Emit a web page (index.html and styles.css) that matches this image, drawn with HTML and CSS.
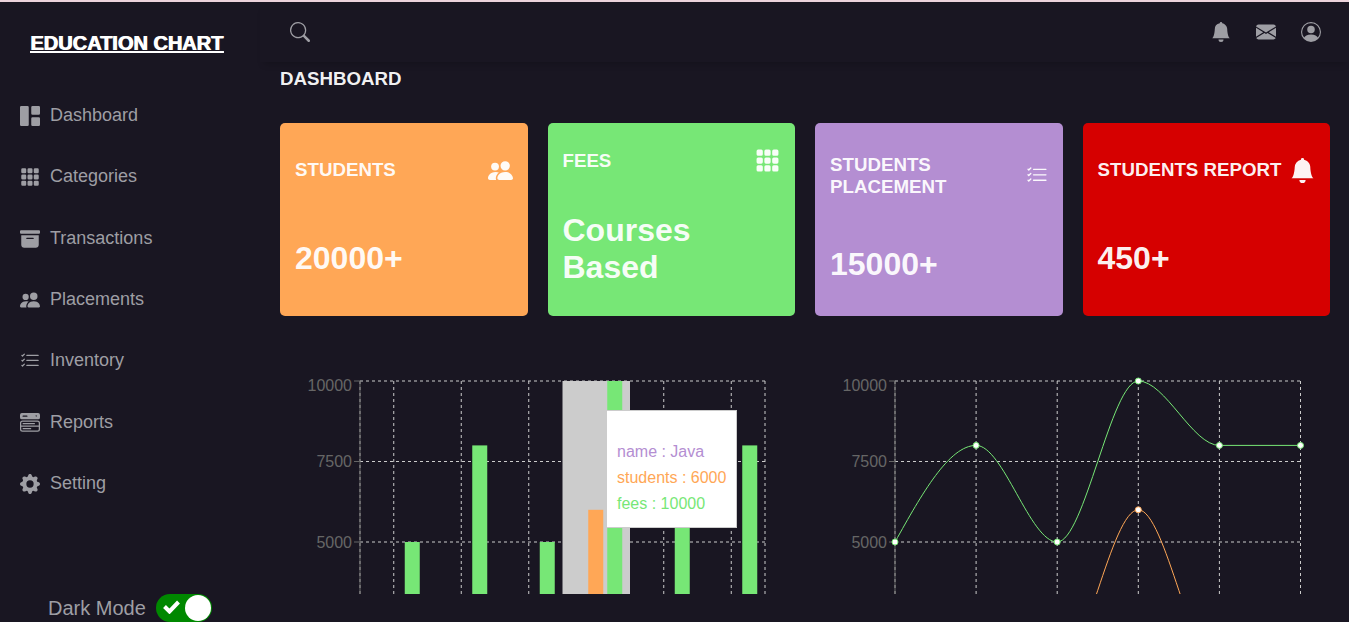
FILE: index.html
```html
<!DOCTYPE html>
<html lang="en">
<head>
<meta charset="utf-8">
<title>Education Chart</title>
<link rel="stylesheet" href="styles.css">
</head>
<body>
<svg class="sprite" aria-hidden="true">
  <symbol id="search" viewBox="0 0 16 16"><path d="M11.742 10.344a6.5 6.5 0 1 0-1.397 1.398h-.001c.03.04.062.078.098.115l3.85 3.85a1 1 0 0 0 1.415-1.414l-3.85-3.85a1.007 1.007 0 0 0-.115-.1zM12 6.5a5.5 5.5 0 1 1-11 0 5.5 5.5 0 0 1 11 0z"/></symbol>
  <symbol id="bell" viewBox="0 0 16 16"><path d="M8 16a2 2 0 0 0 2-2H6a2 2 0 0 0 2 2zm.995-14.901a1 1 0 1 0-1.99 0A5.002 5.002 0 0 0 3 6c0 1.098-.5 6-2 7h14c-1.5-1-2-5.902-2-7 0-2.42-1.72-4.44-4.005-4.901z"/></symbol>
  <symbol id="envelope" viewBox="0 0 16 16"><path d="M.05 3.555A2 2 0 0 1 2 2h12a2 2 0 0 1 1.95 1.555L8 8.414.05 3.555ZM0 4.697v7.104l5.803-3.558L0 4.697ZM6.761 8.83l-6.57 4.027A2 2 0 0 0 2 14h12a2 2 0 0 0 1.808-1.144l-6.57-4.027L8 9.586l-1.239-.757Zm3.436-.586L16 11.801V4.697l-5.803 3.546Z"/></symbol>
  <symbol id="person" viewBox="0 0 16 16"><path d="M11 6a3 3 0 1 1-6 0 3 3 0 0 1 6 0z"/><path fill-rule="evenodd" d="M0 8a8 8 0 1 1 16 0A8 8 0 0 1 0 8zm8-7a7 7 0 0 0-5.468 11.37C3.242 11.226 4.805 10 8 10s4.757 1.225 5.468 2.37A7 7 0 0 0 8 1z"/></symbol>
  <symbol id="dashboard" viewBox="0 0 16 16"><path d="M0 1a1 1 0 0 1 1-1h5a1 1 0 0 1 1 1v14a1 1 0 0 1-1 1H1a1 1 0 0 1-1-1V1zm9 0a1 1 0 0 1 1-1h5a1 1 0 0 1 1 1v5a1 1 0 0 1-1 1h-5a1 1 0 0 1-1-1V1zm0 9a1 1 0 0 1 1-1h5a1 1 0 0 1 1 1v5a1 1 0 0 1-1 1h-5a1 1 0 0 1-1-1v-5z"/></symbol>
  <symbol id="grid" viewBox="0 0 16 16"><path d="M1 2a1 1 0 0 1 1-1h2a1 1 0 0 1 1 1v2a1 1 0 0 1-1 1H2a1 1 0 0 1-1-1V2zm5 0a1 1 0 0 1 1-1h2a1 1 0 0 1 1 1v2a1 1 0 0 1-1 1H7a1 1 0 0 1-1-1V2zm5 0a1 1 0 0 1 1-1h2a1 1 0 0 1 1 1v2a1 1 0 0 1-1 1h-2a1 1 0 0 1-1-1V2zM1 7a1 1 0 0 1 1-1h2a1 1 0 0 1 1 1v2a1 1 0 0 1-1 1H2a1 1 0 0 1-1-1V7zm5 0a1 1 0 0 1 1-1h2a1 1 0 0 1 1 1v2a1 1 0 0 1-1 1H7a1 1 0 0 1-1-1V7zm5 0a1 1 0 0 1 1-1h2a1 1 0 0 1 1 1v2a1 1 0 0 1-1 1h-2a1 1 0 0 1-1-1V7zM1 12a1 1 0 0 1 1-1h2a1 1 0 0 1 1 1v2a1 1 0 0 1-1 1H2a1 1 0 0 1-1-1v-2zm5 0a1 1 0 0 1 1-1h2a1 1 0 0 1 1 1v2a1 1 0 0 1-1 1H7a1 1 0 0 1-1-1v-2zm5 0a1 1 0 0 1 1-1h2a1 1 0 0 1 1 1v2a1 1 0 0 1-1 1h-2a1 1 0 0 1-1-1v-2z"/></symbol>
  <symbol id="archive" viewBox="0 0 16 16"><path d="M12.643 15C13.979 15 15 13.845 15 12.5V5H1v7.5C1 13.845 2.021 15 3.357 15h9.286zM5.5 7h5a.5.5 0 0 1 0 1h-5a.5.5 0 0 1 0-1zM.8 1a.8.8 0 0 0-.8.8V3a.8.8 0 0 0 .8.8h14.4A.8.8 0 0 0 16 3V1.800a.8.8 0 0 0-.8-.8H.8z"/></symbol>
  <symbol id="people" viewBox="0 0 16 16"><path d="M7 14s-1 0-1-1 1-4 5-4 5 3 5 4-1 1-1 1H7zm4-6a3 3 0 1 0 0-6 3 3 0 0 0 0 6z"/><path fill-rule="evenodd" d="M5.216 14A2.238 2.238 0 0 1 5 13c0-1.355.68-2.750 1.936-3.720A6.325 6.325 0 0 0 5 9c-4 0-5 3-5 4s1 1 1 1h4.216z"/><path d="M4.500 8a2.500 2.500 0 1 0 0-5 2.500 2.500 0 0 0 0 5z"/></symbol>
  <symbol id="checklist" viewBox="0 0 16 16"><path fill-rule="evenodd" d="M5 11.500a.5.5 0 0 1 .5-.5h9a.5.5 0 0 1 0 1h-9a.5.5 0 0 1-.5-.5zm0-4a.5.5 0 0 1 .5-.5h9a.5.5 0 0 1 0 1h-9a.5.5 0 0 1-.5-.5zm0-4a.5.5 0 0 1 .5-.5h9a.5.5 0 0 1 0 1h-9a.5.5 0 0 1-.5-.5zM3.854 2.146a.5.5 0 0 1 0 .708l-1.500 1.500a.5.5 0 0 1-.708 0l-.5-.5a.5.5 0 1 1 .708-.708L2 3.293l1.146-1.147a.5.5 0 0 1 .708 0zm0 4a.5.5 0 0 1 0 .708l-1.500 1.500a.5.5 0 0 1-.708 0l-.5-.5a.5.5 0 1 1 .708-.708L2 7.293l1.146-1.147a.5.5 0 0 1 .708 0zm0 4a.5.5 0 0 1 0 .708l-1.500 1.500a.5.5 0 0 1-.708 0l-.5-.5a.5.5 0 0 1 .708-.708l.146.147 1.146-1.147a.5.5 0 0 1 .708 0z"/></symbol>
  <symbol id="menu" viewBox="0 0 16 16"><path d="M1.500 0A1.500 1.500 0 0 0 0 1.500v2A1.500 1.500 0 0 0 1.500 5h13A1.500 1.500 0 0 0 16 3.500v-2A1.500 1.500 0 0 0 14.500 0h-13zm1 2h3a.5.5 0 0 1 0 1h-3a.5.5 0 0 1 0-1zm9.927.427A.25.25 0 0 1 12.604 2h.792a.25.25 0 0 1 .177.427l-.396.396a.25.25 0 0 1-.354 0l-.396-.396zM0 8a2 2 0 0 1 2-2h12a2 2 0 0 1 2 2v5a2 2 0 0 1-2 2H2a2 2 0 0 1-2-2V8zm1 3v2a1 1 0 0 0 1 1h12a1 1 0 0 0 1-1v-2H1zm14-1V8a1 1 0 0 0-1-1H2a1 1 0 0 0-1 1v2h14zM2 8.500a.5.5 0 0 1 .5-.5h9a.5.5 0 0 1 0 1h-9a.5.5 0 0 1-.5-.5zm0 4a.5.5 0 0 1 .5-.5h6a.5.5 0 0 1 0 1h-6a.5.5 0 0 1-.5-.5z"/></symbol>
  <symbol id="gear" viewBox="0 0 16 16"><path d="M9.405 1.050c-.413-1.400-2.397-1.400-2.810 0l-.1.340a1.464 1.464 0 0 1-2.105.872l-.31-.17c-1.283-.698-2.686.705-1.987 1.987l.169.311c.446.820.023 1.841-.872 2.105l-.34.1c-1.400.413-1.400 2.397 0 2.810l.34.1a1.464 1.464 0 0 1 .872 2.105l-.17.310c-.698 1.283.705 2.686 1.987 1.987l.311-.169a1.464 1.464 0 0 1 2.105.872l.1.340c.413 1.400 2.397 1.400 2.810 0l.1-.34a1.464 1.464 0 0 1 2.105-.872l.310.170c1.283.698 2.686-.705 1.987-1.987l-.169-.311a1.464 1.464 0 0 1 .872-2.105l.340-.1c1.400-.413 1.400-2.397 0-2.810l-.34-.1a1.464 1.464 0 0 1-.872-2.105l.170-.31c.698-1.283-.705-2.686-1.987-1.987l-.311.169a1.464 1.464 0 0 1-2.105-.872l-.1-.34zM8 10.930a2.929 2.929 0 1 1 0-5.860 2.929 2.929 0 0 1 0 5.858z"/></symbol>
</svg>

<div class="layout">
  <aside class="sidebar">
    <a class="brand" href="#">EDUCATION CHART</a>
    <nav aria-label="Main">
      <ul class="menu">
        <li><a class="menu-link" href="#"><svg class="icon"><use href="#dashboard"/></svg>Dashboard</a></li>
        <li><a class="menu-link" href="#"><svg class="icon"><use href="#grid"/></svg>Categories</a></li>
        <li><a class="menu-link" href="#"><svg class="icon"><use href="#archive"/></svg>Transactions</a></li>
        <li><a class="menu-link" href="#"><svg class="icon"><use href="#people"/></svg>Placements</a></li>
        <li><a class="menu-link" href="#"><svg class="icon"><use href="#checklist"/></svg>Inventory</a></li>
        <li><a class="menu-link" href="#"><svg class="icon"><use href="#menu"/></svg>Reports</a></li>
        <li><a class="menu-link" href="#"><svg class="icon"><use href="#gear"/></svg>Setting</a></li>
      </ul>
    </nav>
    <div class="mode">
      <label for="dark">Dark Mode</label>
      <span class="switch">
        <input class="switch-input" id="dark" type="checkbox" role="switch" checked>
        <svg class="switch-check" viewBox="0 0 17 14" aria-hidden="true"><path d="M1.500 6.500 6.500 11.500 15.500 2"/></svg>
      </span>
    </div>
  </aside>

  <div class="page">
    <header class="header">
      <button class="icon-button" type="button" aria-label="Search"><svg class="icon"><use href="#search"/></svg></button>
      <div class="header-actions">
        <button class="icon-button" type="button" aria-label="Notifications"><svg class="icon"><use href="#bell"/></svg></button>
        <button class="icon-button" type="button" aria-label="Messages"><svg class="icon"><use href="#envelope"/></svg></button>
        <button class="icon-button" type="button" aria-label="Account"><svg class="icon"><use href="#person"/></svg></button>
      </div>
    </header>

    <main class="main">
      <h3 class="title">DASHBOARD</h3>
      <div class="cards">
        <section class="card card-orange">
          <div class="card-head"><h3>STUDENTS</h3><svg class="card-icon"><use href="#people"/></svg></div>
          <h1>20000+</h1>
        </section>
        <section class="card card-green">
          <div class="card-head"><h3>FEES</h3><svg class="card-icon"><use href="#grid"/></svg></div>
          <h1>Courses Based</h1>
        </section>
        <section class="card card-purple">
          <div class="card-head"><h3>STUDENTS PLACEMENT</h3><svg class="card-icon"><use href="#checklist"/></svg></div>
          <h1>15000+</h1>
        </section>
        <section class="card card-red">
          <div class="card-head"><h3>STUDENTS REPORT</h3><svg class="card-icon"><use href="#bell"/></svg></div>
          <h1>450+</h1>
        </section>
      </div>

      <div class="charts">
        <div class="chart">
          <svg class="plot" viewBox="0 0 515 332" preserveAspectRatio="xMidYMin meet" role="img" aria-label="Students and fees by course, bars">
            <path class="grid-line" d="M80 327H485M80 246.500H485M80 166H485M80 85.500H485M80 5H485"/>
            <path class="grid-line" d="M113.750 5V327M181.250 5V327M248.750 5V327M316.250 5V327M383.750 5V327M451.250 5V327M80 5V327M485 5V327"/>
            <path class="axis" d="M80 5V327M74 5H80M74 85.500H80M74 166H80"/>
            <g class="tick"><text x="72" y="15">10000</text><text x="72" y="91">7500</text><text x="72" y="172">5000</text></g>
            <rect class="cursor" x="282.500" y="5" width="67.500" height="322"/>
            <rect class="bar-orange" x="308.250" y="133.800" width="15" height="193.200"/>
            <g class="bar-green">
              <rect x="124.750" y="166" width="15" height="161"/>
              <rect x="192.250" y="69.400" width="15" height="257.600"/>
              <rect x="259.750" y="166" width="15" height="161"/>
              <rect x="327.250" y="5" width="15" height="322"/>
              <rect x="394.750" y="69.400" width="15" height="257.600"/>
              <rect x="462.250" y="69.400" width="15" height="257.600"/>
            </g>
          </svg>
          <div class="tooltip">
            <ul>
              <li class="text-purple">name : Java</li>
              <li class="text-orange">students : 6000</li>
              <li class="text-green">fees : 10000</li>
            </ul>
          </div>
        </div>
        <div class="chart">
          <svg class="plot" viewBox="0 0 515 332" preserveAspectRatio="xMidYMin meet" role="img" aria-label="Students and fees by course, lines">
            <path class="grid-line" d="M80 327H485.500M80 246.500H485.500M80 166H485.500M80 85.500H485.500M80 5H485.500"/>
            <path class="grid-line" d="M80 5V327M161.100 5V327M242.200 5V327M323.300 5V327M404.400 5V327M485.500 5V327"/>
            <path class="axis" d="M80 5V327M74 5H80M74 85.500H80M74 166H80"/>
            <g class="tick"><text x="72" y="15">10000</text><text x="72" y="91">7500</text><text x="72" y="172">5000</text></g>
            <path class="line-orange" d="M242.200 294.800C269.200 294.800 296.300 133.800 323.300 133.800C350.300 133.800 377.400 294.800 404.400 294.800"/>
            <circle class="dot-orange" cx="323.300" cy="133.800" r="3"/>
            <path class="line-green" d="M80 166C107 117.700 134.100 69.400 161.100 69.400C188.100 69.400 215.200 166 242.200 166C269.200 166 296.300 5 323.300 5C350.300 5 377.400 69.400 404.400 69.400L485.500 69.400"/>
            <g class="dot-green">
              <circle cx="80" cy="166" r="3"/><circle cx="161.100" cy="69.400" r="3"/><circle cx="242.200" cy="166" r="3"/>
              <circle cx="323.300" cy="5" r="3"/><circle cx="404.400" cy="69.400" r="3"/><circle cx="485.500" cy="69.400" r="3"/>
            </g>
          </svg>
        </div>
      </div>
    </main>
  </div>
</div>
</body>
</html>
```
FILE: styles.css
```css
:root {
  --bg: #191622;
  --muted: #9e9ea4;
  --orange: #ffa756;
  --green: #77e776;
  --purple: #b48ed2;
  --red: #d60000;
}

* {
  box-sizing: border-box;
}

body {
  margin: 0;
  background: var(--bg);
  color: var(--muted);
  font-family: "Liberation Sans", Arial, sans-serif;
  font-size: 16px;
}

ul {
  margin: 0;
  padding: 0;
  list-style: none;
}

a {
  color: inherit;
}

.sprite {
  display: none;
}

.layout {
  display: grid;
  grid-template-columns: 260px minmax(0, 1fr);
  height: 100vh;
  overflow: hidden;
  border-top: 2px solid #ecd3dc;
}

.icon {
  width: 20px;
  height: 20px;
  flex: none;
  fill: currentColor;
}

/* Sidebar */
.sidebar {
  display: flex;
  flex-direction: column;
}

.brand {
  margin: 30px 30px 0;
  color: #fff;
  font-size: 20px;
  line-height: 22px;
  font-weight: 700;
  text-decoration: underline 2px;
  text-shadow: 1px 0 0 #fff;
  white-space: nowrap;
}

.menu {
  display: grid;
  grid-auto-rows: 1fr;
  height: 429px;
  margin-top: 31px;
}

.menu-link {
  display: flex;
  align-items: center;
  gap: 10px;
  height: 100%;
  padding: 0 20px;
  font-size: 18px;
  text-decoration: none;
}

.menu-link .icon {
  margin-top: 1px;
}

.mode {
  display: flex;
  align-items: center;
  gap: 10px;
  margin-top: auto;
  padding-left: 48px;
  font-size: 20px;
}

.switch {
  position: relative;
  display: flex;
}

.switch-input {
  appearance: none;
  display: flex;
  justify-content: flex-end;
  width: 56px;
  height: 28px;
  margin: 0;
  padding: 1px;
  border-radius: 14px;
  background: #080;
}

.switch-input::before {
  content: "";
  width: 26px;
  height: 26px;
  border-radius: 50%;
  background: #fff;
}

.switch-input:not(:checked) {
  justify-content: flex-start;
  background: #888;
}

.switch-check {
  position: absolute;
  top: 6px;
  left: 7px;
  width: 17px;
  height: 14px;
  fill: none;
  stroke: #fff;
  stroke-width: 4;
  pointer-events: none;
}

/* Header */
.page {
  display: flex;
  flex-direction: column;
  min-height: 0;
  padding-bottom: 28px;
}

.header {
  display: flex;
  flex: none;
  align-items: center;
  justify-content: space-between;
  height: 60px;
  padding: 0 28px 0 30px;
  box-shadow: 0 6px 7px -4px rgba(0, 0, 0, 0.2);
}

.header-actions {
  display: flex;
  gap: 25px;
}

.icon-button {
  display: flex;
  padding: 0;
  border: 0;
  background: none;
  color: inherit;
}

/* Main */
.main {
  flex: 1;
  min-height: 0;
  overflow: hidden;
  padding: 6px 19px 0 20px;
  color: rgba(255, 255, 255, 0.95);
}

.title {
  margin: 0;
  line-height: 22px;
}

.cards {
  display: grid;
  grid-template-columns: repeat(4, minmax(0, 1fr));
  gap: 20px;
  margin-top: 33px;
}

.card {
  display: flex;
  flex-direction: column;
  justify-content: space-around;
  min-height: 193px;
  padding: 8px 15px;
  border-radius: 5px;
}

.card-head {
  display: flex;
  align-items: center;
  justify-content: space-between;
}

.card-head h3 {
  line-height: 22px;
}

.card h1 {
  font-size: 32px;
}

.card-icon {
  width: 25px;
  height: 25px;
  fill: currentColor;
}

.card-orange { background: var(--orange); }
.card-green { background: var(--green); }
.card-purple { background: var(--purple); }
.card-red { background: var(--red); }

/* Charts */
.charts {
  display: grid;
  grid-template-columns: repeat(2, minmax(0, 1fr));
  gap: 20px;
  margin-top: 60px;
}

.chart {
  position: relative;
}

.plot {
  display: block;
  width: 100%;
}

.grid-line {
  fill: none;
  stroke: #ccc;
  stroke-dasharray: 3 3;
}

.axis {
  fill: none;
  stroke: #666;
}

.tick {
  fill: #666;
  font-size: 16px;
  text-anchor: end;
}

.cursor { fill: #ccc; }
.bar-orange { fill: var(--orange); }
.bar-green { fill: var(--green); }

.line-orange { fill: none; stroke: var(--orange); }
.line-green { fill: none; stroke: var(--green); }
.dot-orange { fill: #fff; stroke: var(--orange); }
.dot-green { fill: #fff; stroke: var(--green); }

.tooltip {
  position: absolute;
  top: 34px;
  left: 326px;
  padding: 28px 10px 10px;
  border: 1px solid #ccc;
  background: #fff;
  line-height: 18px;
  white-space: nowrap;
}

.tooltip li {
  padding: 4px 0;
}

.text-purple { color: var(--purple); }
.text-orange { color: var(--orange); }
.text-green { color: var(--green); }
```
